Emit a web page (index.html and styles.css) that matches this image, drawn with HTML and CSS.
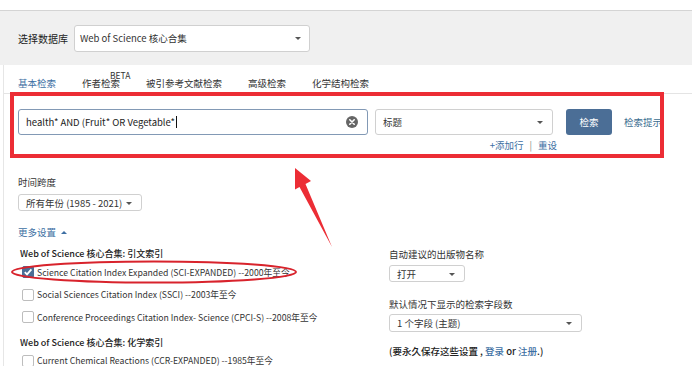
FILE: index.html
```html
<!DOCTYPE html>
<html lang="zh-CN">
<head>
    <meta charset="UTF-8">
    <title>Web of Science 检索</title>
    <link rel="stylesheet" href="styles.css">
</head>
<body>
    <div class="topbar"></div>
    <div class="db-bar">
        <span class="db-label">选择数据库</span>
        <div class="select db-select">Web of Science 核心合集<span class="caret"></span></div>
    </div>

    <div class="panel">
        <nav class="tabs">
            <a class="tab active">基本检索</a>
            <a class="tab">作者检索<sup class="beta">BETA</sup></a>
            <a class="tab">被引参考文献检索</a>
            <a class="tab">高级检索</a>
            <a class="tab">化学结构检索</a>
        </nav>

        <div class="search">
            <div class="search-row">
                <div class="query">
                    <span class="query-text">health* AND (Fruit* OR Vegetable*</span><span class="cursor"></span>
                    <span class="clear">
                        <svg width="12" height="12" viewBox="0 0 12 12">
                            <circle cx="6" cy="6" r="6" fill="#666"/>
                            <path d="M3.8 3.8 L8.2 8.2 M8.2 3.8 L3.8 8.2" stroke="#fff" stroke-width="1.6" stroke-linecap="round"/>
                        </svg>
                    </span>
                </div>
                <div class="select field-select">标题<span class="caret"></span></div>
                <button class="search-btn">检索</button>
                <a class="tips">检索提示</a>
            </div>
            <div class="row-links"><a>+添加行</a><span class="sep">|</span><a>重设</a></div>
        </div>

        <div class="timespan">
            <div class="label">时间跨度</div>
            <div class="select year-select">所有年份 (1985 - 2021)<span class="caret"></span></div>
        </div>

        <div class="more">更多设置 <span class="up"></span></div>

        <div class="settings">
            <div class="col-left">
                <div class="group-title">Web of Science 核心合集: 引文索引</div>
                <label class="check-row"><span class="box checked">
                    <svg width="10" height="10" viewBox="0 0 10 10"><path d="M1.8 5.2 L4 7.4 L8.4 2.4" stroke="#fff" stroke-width="1.8" fill="none"/></svg>
                </span>Science Citation Index Expanded (SCI-EXPANDED) --2000年至今</label>
                <label class="check-row"><span class="box"></span>Social Sciences Citation Index (SSCI) --2003年至今</label>
                <label class="check-row"><span class="box"></span>Conference Proceedings Citation Index- Science (CPCI-S) --2008年至今</label>
                <div class="group-title second">Web of Science 核心合集: 化学索引</div>
                <label class="check-row"><span class="box"></span>Current Chemical Reactions (CCR-EXPANDED) --1985年至今</label>
            </div>
            <div class="col-right">
                <div class="label">自动建议的出版物名称</div>
                <div class="select open-select">打开<span class="caret"></span></div>
                <div class="label fields-label">默认情况下显示的检索字段数</div>
                <div class="select count-select">1 个字段 (主题)<span class="caret"></span></div>
                <div class="save-note">(要永久保存这些设置 , <a>登录</a> or <a>注册</a>.)</div>
            </div>
        </div>
    </div>

    <!-- 标注 -->
    <div class="mark-box"></div>
    <svg class="marks" width="692" height="366" viewBox="0 0 692 366">
        <path d="M295 168 L311 181 L305.5 184 L332 247 L299.5 187 L295 189.5 Z" fill="#ec2d35"/>
        <ellipse cx="154" cy="272" rx="142" ry="10.5" fill="none" stroke="#d8232c" stroke-width="2"/>
    </svg>
</body>
</html>
```

FILE: styles.css
```css
body {
    margin: 0;
    width: 692px;
    height: 366px;
    overflow: hidden;
    position: relative;
    background: #fff;
    color: #333;
    font-family: "Noto Sans CJK SC", "Noto Sans", sans-serif;
    font-size: 9.5px;
}
a {
    color: #3d6fa3;
    cursor: pointer;
}
.topbar {
    height: 10px;
    border-bottom: 1px solid #d4d4d4;
}
.db-bar {
    height: 54px;
    background: #f0f0f0;
    display: flex;
    align-items: center;
    padding-left: 18px;
}
.db-label {
    font-size: 10px;
    color: #222;
    margin-right: 6px;
}
.select {
    position: relative;
    box-sizing: border-box;
    background: #fff;
    border: 1px solid #d0d0d0;
    border-radius: 3px;
    display: flex;
    align-items: center;
    padding-left: 7px;
    color: #333;
}
.caret {
    position: absolute;
    right: 9px;
    top: 50%;
    margin-top: -1px;
    border-left: 3px solid transparent;
    border-right: 3px solid transparent;
    border-top: 3px solid #555;
}
.db-select {
    width: 236px;
    height: 27px;
    padding-left: 5px;
}
.db-select .caret {
    right: 8px;
}
.panel {
    margin-left: 3px;
    border-left: 1px solid #e6e6e6;
}
.tabs {
    display: flex;
    padding: 11px 0 3px 14px;
    border-bottom: 1px solid #e4e4e4;
    line-height: 14px;
    height: 14px;
}
.tab {
    color: #333;
    margin-right: 26px;
    position: relative;
    white-space: nowrap;
}
.tab.active {
    color: #3d6fa3;
}
.beta {
    position: absolute;
    left: 28px;
    top: -6px;
    font-size: 8.5px;
    line-height: 10px;
}
.search {
    padding: 15px 0 0 14px;
}
.search-row {
    display: flex;
    align-items: center;
    height: 26px;
}
.query {
    position: relative;
    box-sizing: border-box;
    width: 350px;
    height: 26px;
    border: 1px solid #8299b5;
    border-radius: 3px;
    display: flex;
    align-items: center;
    padding-left: 7px;
    color: #222;
}
.cursor {
    display: inline-block;
    width: 1px;
    height: 12px;
    background: #111;
    margin-left: 1px;
}
.clear {
    position: absolute;
    right: 9px;
    top: 6px;
    height: 12px;
}
.field-select {
    width: 178px;
    height: 26px;
    margin-left: 7px;
}
.search-btn {
    margin-left: 13px;
    width: 46px;
    height: 26px;
    border: none;
    border-radius: 3px;
    background: #4b6e96;
    color: #fff;
    font-family: inherit;
    font-size: 9.5px;
}
.tips {
    margin-left: 12px;
    color: #3a6c8f;
}
.row-links {
    width: 539px;
    text-align: right;
    margin-top: 4px;
    line-height: 12px;
}
.sep {
    color: #888;
    margin: 0 6px;
}
.timespan {
    padding-left: 14px;
    margin-top: 24px;
}
.label {
    line-height: 14px;
    color: #333;
}
.year-select {
    width: 124px;
    height: 17px;
    margin-top: 5px;
}
.more {
    padding-left: 14px;
    margin-top: 14px;
    line-height: 14px;
    color: #3d6fa3;
}
.up {
    display: inline-block;
    vertical-align: middle;
    margin-left: 3px;
    margin-top: -2px;
    border-left: 3px solid transparent;
    border-right: 3px solid transparent;
    border-bottom: 3px solid #3d6fa3;
}
.settings {
    display: grid;
    grid-template-columns: 371px 1fr;
    padding-left: 14px;
    margin-top: 8px;
    height: 120px;
}
.group-title {
    line-height: 14px;
    font-size: 9px;
    font-weight: 500;
    color: #222;
    padding-left: 2px;
}
.group-title.second {
    margin-top: 7px;
}
.check-row {
    display: flex;
    align-items: center;
    height: 22.5px;
    padding-left: 4px;
    font-size: 8.7px;
    color: #333;
}
.box {
    box-sizing: border-box;
    width: 12px;
    height: 12px;
    border: 1px solid #bdbdbd;
    border-radius: 2px;
    margin-right: 3px;
    display: flex;
    align-items: center;
    justify-content: center;
}
.box.checked {
    background: #4b6e96;
    border-color: #4b6e96;
}
.open-select {
    width: 76px;
    height: 17px;
    margin-top: 4px;
}
.fields-label {
    margin-top: 15px;
}
.count-select {
    width: 193px;
    height: 18px;
    margin-top: 3px;
}
.save-note {
    margin-top: 12px;
    line-height: 14px;
    font-weight: 500;
    color: #222;
}
.mark-box {
    position: absolute;
    left: 10px;
    top: 92px;
    width: 646px;
    height: 58px;
    border: 4px solid #ec2d35;
}
.marks {
    position: absolute;
    left: 0;
    top: 0;
    pointer-events: none;
}
```
